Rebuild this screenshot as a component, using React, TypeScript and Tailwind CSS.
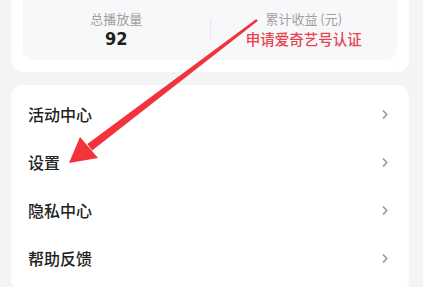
import React from 'react';

const cjk = { fontFamily: '"Noto Sans CJK SC", "Noto Sans", sans-serif' };

const Chevron: React.FC = () => (
  <svg width="8" height="11" viewBox="0 0 8 11" fill="none">
    <path d="M2.5 2 L5.8 5.5 L2.5 9" stroke="#9a9a9a" strokeWidth="1.7" strokeLinecap="round" strokeLinejoin="round" />
  </svg>
);

const menu = ['活动中心', '设置', '隐私中心', '帮助反馈'];

const App: React.FC = () => {
  return (
    <div className="relative w-[423px] h-[287px] overflow-hidden bg-[#f3f4f6]" style={cjk}>
      <div className="mx-[11px] w-[398px] bg-white rounded-b-[12px] px-[12px] pb-[12px]">
        <div className="h-[60px] bg-[#f7f8fa] rounded-b-[10px] flex items-center">
          <div className="flex-1 flex flex-col items-center pt-[1px]">
            <span className="text-[13px] leading-[17px] text-[#a0a0a0]">总播放量</span>
            <span
              className="text-[18px] leading-[24px] font-bold text-[#1e1e1e]"
              style={{ fontFamily: '"Liberation Sans Narrow", "DejaVu Sans Condensed", sans-serif' }}
            >
              92
            </span>
          </div>
          <div className="w-px h-[22px] bg-[#e6e7ea]" />
          <div className="flex-1 flex flex-col items-center pt-[1px]">
            <span className="text-[13px] leading-[17px] text-[#a0a0a0]">累计收益 (元)</span>
            <span className="text-[14.5px] leading-[24px] font-medium text-[#e8434f]">申请爱奇艺号认证</span>
          </div>
        </div>
      </div>

      <div className="mx-[11px] mt-[13px] w-[398px] bg-white rounded-[12px] pt-[5px] pb-[10px]">
        {menu.map((m) => (
          <div key={m} className="h-[48px] flex items-center justify-between pl-[17px] pr-[20px]">
            <span className="text-[16px] font-medium text-[#222]">{m}</span>
            <Chevron />
          </div>
        ))}
      </div>

      <svg className="absolute left-0 top-0 pointer-events-none" width="423" height="287" viewBox="0 0 423 287">
        <polygon points="257.7,20.9 92.1,150.4 87.3,144.0 256.3,19.1" fill="#f2333c" />
        <polygon points="69,163 80,137 98,158" fill="#f2333c" />
      </svg>
    </div>
  );
};

export default App;
